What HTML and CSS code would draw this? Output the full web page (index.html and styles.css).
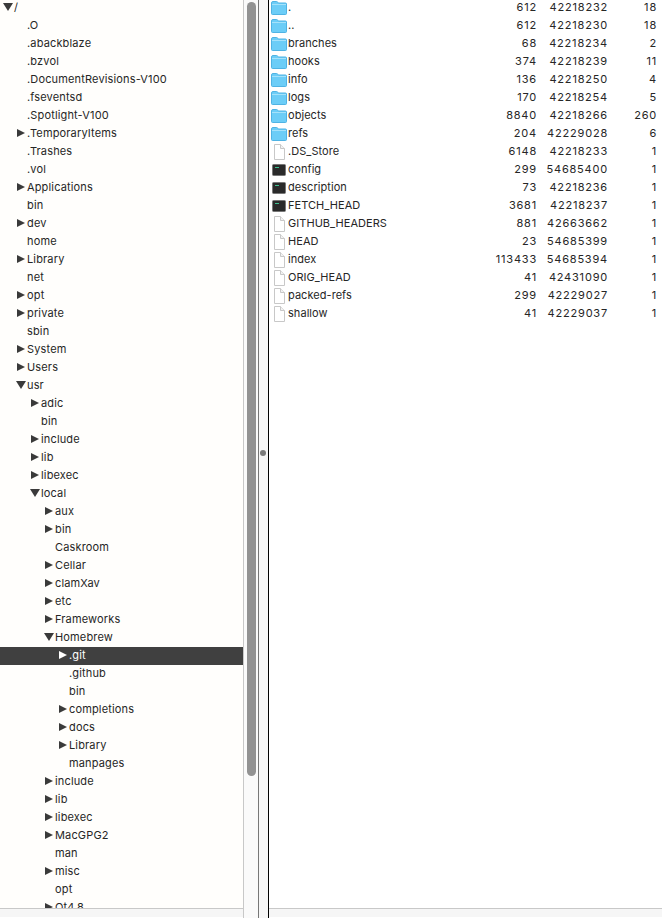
FILE: index.html
```html
<!DOCTYPE html>
<html lang="en">
<head>
    <meta charset="UTF-8">
    <title>Files</title>
    <link rel="stylesheet" href="styles.css">
</head>
<body>
    <svg class="defs" width="0" height="0">
        <symbol id="folder" viewBox="0 0 16 14">
            <path d="M0.5 2 Q0.5 0.5 2 0.5 H5.5 Q6.5 0.5 7 1.5 L7.5 2 H14.5 Q15.5 2 15.5 3 V12.5 Q15.5 13.5 14.5 13.5 H1.5 Q0.5 13.5 0.5 12.5 Z" fill="#6ccdf7" stroke="#4fb3e4"/>
            <path d="M1 3.5 H15" stroke="#a5e2fb"/>
        </symbol>
        <symbol id="doc" viewBox="0 0 14 16">
            <path d="M2.5 0.5 H8.5 L12.5 4.5 V15.5 H2.5 Z" fill="#fff" stroke="#c8c8c8"/>
            <path d="M8.5 0.5 V4.5 H12.5" fill="#f2f2f2" stroke="#c8c8c8"/>
        </symbol>
        <symbol id="exec" viewBox="0 0 14 12">
            <rect x="0.5" y="0.5" width="13" height="11" rx="1" fill="#2a2a2a" stroke="#777"/>
            <path d="M3 3.5 H7" stroke="#3fbf8f"/>
        </symbol>
    </svg>
    <div class="app">
        <div class="left">
            <div class="tree-col">
                <div class="tree">
                    <div class="node"><span class="arrow open"></span>/</div>
                    <div class="node d1"><span class="arrow none"></span>.O</div>
                    <div class="node d1"><span class="arrow none"></span>.abackblaze</div>
                    <div class="node d1"><span class="arrow none"></span>.bzvol</div>
                    <div class="node d1"><span class="arrow none"></span>.DocumentRevisions-V100</div>
                    <div class="node d1"><span class="arrow none"></span>.fseventsd</div>
                    <div class="node d1"><span class="arrow none"></span>.Spotlight-V100</div>
                    <div class="node d1"><span class="arrow"></span>.TemporaryItems</div>
                    <div class="node d1"><span class="arrow none"></span>.Trashes</div>
                    <div class="node d1"><span class="arrow none"></span>.vol</div>
                    <div class="node d1"><span class="arrow"></span>Applications</div>
                    <div class="node d1"><span class="arrow none"></span>bin</div>
                    <div class="node d1"><span class="arrow"></span>dev</div>
                    <div class="node d1"><span class="arrow none"></span>home</div>
                    <div class="node d1"><span class="arrow"></span>Library</div>
                    <div class="node d1"><span class="arrow none"></span>net</div>
                    <div class="node d1"><span class="arrow"></span>opt</div>
                    <div class="node d1"><span class="arrow"></span>private</div>
                    <div class="node d1"><span class="arrow none"></span>sbin</div>
                    <div class="node d1"><span class="arrow"></span>System</div>
                    <div class="node d1"><span class="arrow"></span>Users</div>
                    <div class="node d1"><span class="arrow open"></span>usr</div>
                    <div class="node d2"><span class="arrow"></span>adic</div>
                    <div class="node d2"><span class="arrow none"></span>bin</div>
                    <div class="node d2"><span class="arrow"></span>include</div>
                    <div class="node d2"><span class="arrow"></span>lib</div>
                    <div class="node d2"><span class="arrow"></span>libexec</div>
                    <div class="node d2"><span class="arrow open"></span>local</div>
                    <div class="node d3"><span class="arrow"></span>aux</div>
                    <div class="node d3"><span class="arrow"></span>bin</div>
                    <div class="node d3"><span class="arrow none"></span>Caskroom</div>
                    <div class="node d3"><span class="arrow"></span>Cellar</div>
                    <div class="node d3"><span class="arrow"></span>clamXav</div>
                    <div class="node d3"><span class="arrow"></span>etc</div>
                    <div class="node d3"><span class="arrow"></span>Frameworks</div>
                    <div class="node d3"><span class="arrow open"></span>Homebrew</div>
                    <div class="node d4 selected"><span class="arrow"></span>.git</div>
                    <div class="node d4"><span class="arrow none"></span>.github</div>
                    <div class="node d4"><span class="arrow none"></span>bin</div>
                    <div class="node d4"><span class="arrow"></span>completions</div>
                    <div class="node d4"><span class="arrow"></span>docs</div>
                    <div class="node d4"><span class="arrow"></span>Library</div>
                    <div class="node d4"><span class="arrow none"></span>manpages</div>
                    <div class="node d3"><span class="arrow"></span>include</div>
                    <div class="node d3"><span class="arrow"></span>lib</div>
                    <div class="node d3"><span class="arrow"></span>libexec</div>
                    <div class="node d3"><span class="arrow"></span>MacGPG2</div>
                    <div class="node d3"><span class="arrow none"></span>man</div>
                    <div class="node d3"><span class="arrow"></span>misc</div>
                    <div class="node d3"><span class="arrow none"></span>opt</div>
                    <div class="node d3"><span class="arrow"></span>Qt4.8</div>
                </div>
                <div class="hbar"></div>
            </div>
            <div class="scrollbar"><div class="thumb"></div></div>
        </div>
        <div class="gutter"><div class="handle"></div></div>
        <div class="right">
            <div class="files">
                <div class="file"><svg class="ico folder"><use href="#folder"/></svg><span class="name">.</span><span class="num">612</span><span class="num">42218232</span><span class="num">18</span></div>
                <div class="file"><svg class="ico folder"><use href="#folder"/></svg><span class="name">..</span><span class="num">612</span><span class="num">42218230</span><span class="num">18</span></div>
                <div class="file"><svg class="ico folder"><use href="#folder"/></svg><span class="name">branches</span><span class="num">68</span><span class="num">42218234</span><span class="num">2</span></div>
                <div class="file"><svg class="ico folder"><use href="#folder"/></svg><span class="name">hooks</span><span class="num">374</span><span class="num">42218239</span><span class="num">11</span></div>
                <div class="file"><svg class="ico folder"><use href="#folder"/></svg><span class="name">info</span><span class="num">136</span><span class="num">42218250</span><span class="num">4</span></div>
                <div class="file"><svg class="ico folder"><use href="#folder"/></svg><span class="name">logs</span><span class="num">170</span><span class="num">42218254</span><span class="num">5</span></div>
                <div class="file"><svg class="ico folder"><use href="#folder"/></svg><span class="name">objects</span><span class="num">8840</span><span class="num">42218266</span><span class="num">260</span></div>
                <div class="file"><svg class="ico folder"><use href="#folder"/></svg><span class="name">refs</span><span class="num">204</span><span class="num">42229028</span><span class="num">6</span></div>
                <div class="file"><svg class="ico doc"><use href="#doc"/></svg><span class="name">.DS_Store</span><span class="num">6148</span><span class="num">42218233</span><span class="num">1</span></div>
                <div class="file"><svg class="ico exec"><use href="#exec"/></svg><span class="name">config</span><span class="num">299</span><span class="num">54685400</span><span class="num">1</span></div>
                <div class="file"><svg class="ico exec"><use href="#exec"/></svg><span class="name">description</span><span class="num">73</span><span class="num">42218236</span><span class="num">1</span></div>
                <div class="file"><svg class="ico exec"><use href="#exec"/></svg><span class="name">FETCH_HEAD</span><span class="num">3681</span><span class="num">42218237</span><span class="num">1</span></div>
                <div class="file"><svg class="ico doc"><use href="#doc"/></svg><span class="name">GITHUB_HEADERS</span><span class="num">881</span><span class="num">42663662</span><span class="num">1</span></div>
                <div class="file"><svg class="ico doc"><use href="#doc"/></svg><span class="name">HEAD</span><span class="num">23</span><span class="num">54685399</span><span class="num">1</span></div>
                <div class="file"><svg class="ico doc"><use href="#doc"/></svg><span class="name">index</span><span class="num">113433</span><span class="num">54685394</span><span class="num">1</span></div>
                <div class="file"><svg class="ico doc"><use href="#doc"/></svg><span class="name">ORIG_HEAD</span><span class="num">41</span><span class="num">42431090</span><span class="num">1</span></div>
                <div class="file"><svg class="ico doc"><use href="#doc"/></svg><span class="name">packed-refs</span><span class="num">299</span><span class="num">42229027</span><span class="num">1</span></div>
                <div class="file"><svg class="ico doc"><use href="#doc"/></svg><span class="name">shallow</span><span class="num">41</span><span class="num">42229037</span><span class="num">1</span></div>
            </div>
            <div class="hbar"></div>
        </div>
    </div>
</body>
</html>
```
FILE: styles.css
```css
html, body {
    margin: 0;
    height: 100%;
    overflow: hidden;
}
body {
    font-family: Inter, "Liberation Sans", Arial, sans-serif;
    font-size: 11px;
    color: #262626;
    background-color: #fff;
}
.defs {
    display: block;
    height: 0;
}
.app {
    display: flex;
    height: 918px;
}
.left {
    display: flex;
    width: 258px;
    border-right: 1px solid #777;
}
.tree-col {
    flex: 1;
    min-width: 0;
    display: flex;
    flex-direction: column;
    border-right: 1px solid #c8c8c8;
}
.tree {
    flex: 1;
    min-height: 0;
    overflow: hidden;
    background-color: #fffefc;
    margin-top: -1px;
}
.node {
    box-sizing: border-box;
    height: 18px;
    padding-bottom: 2px;
    line-height: 16px;
    display: flex;
    align-items: center;
    white-space: nowrap;
    letter-spacing: 0.15px;
    padding-left: 3px;
}
.d1 { padding-left: 16px; }
.d2 { padding-left: 30px; }
.d3 { padding-left: 44px; }
.d4 { padding-left: 58px; }
.selected {
    background-color: #404040;
    color: #fff;
}
.arrow {
    width: 11px;
    height: 16px;
    flex: none;
    position: relative;
}
.arrow::before {
    content: "";
    position: absolute;
    left: 1px;
    top: 3.5px;
    border-style: solid;
    border-width: 4.5px 0 4.5px 8px;
    border-color: transparent transparent transparent #3a3a3a;
}
.arrow.open::before {
    left: 0;
    top: 4px;
    border-width: 8px 5px 0 5px;
    border-color: #3a3a3a transparent transparent transparent;
}
.arrow.none::before {
    display: none;
}
.selected .arrow::before {
    border-left-color: #fff;
}
.hbar {
    height: 8px;
    flex: none;
    background-color: #f6f6f6;
    border-top: 1px solid #c8c8c8;
    border-bottom: 1px solid #fff;
}
.scrollbar {
    width: 14px;
    flex: none;
    background-color: #fafafa;
    padding: 2px 2px 0 3px;
    box-sizing: border-box;
}
.thumb {
    height: 774px;
    background-color: #929292;
    border-radius: 4.5px;
}
.gutter {
    width: 9px;
    flex: none;
    background-color: #f6f6f6;
    border-right: 1px solid #000;
    display: flex;
    align-items: center;
    justify-content: center;
}
.handle {
    width: 6px;
    height: 6px;
    margin-bottom: 13px;
    margin-right: 1px;
    border-radius: 50%;
    background-color: #7a7a7a;
}
.right {
    flex: 1;
    min-width: 0;
    display: flex;
    flex-direction: column;
}
.files {
    flex: 1;
    min-height: 0;
    overflow: hidden;
    margin-top: -1px;
}
.file {
    height: 18px;
    display: grid;
    grid-template-columns: 19px 1fr 55px 71px 49px;
    align-items: center;
    white-space: nowrap;
    padding-right: 5px;
}
.ico {
    display: block;
    justify-self: center;
}
.ico.folder {
    width: 16px;
    height: 14px;
}
.ico.doc {
    width: 14px;
    height: 16px;
}
.ico.exec {
    width: 14px;
    height: 12px;
}
.name, .num {
    line-height: 16px;
    margin-bottom: 2px;
}
.name {
    min-width: 0;
    letter-spacing: 0.05px;
}
.num {
    text-align: right;
    letter-spacing: 0.8px;
}
```
